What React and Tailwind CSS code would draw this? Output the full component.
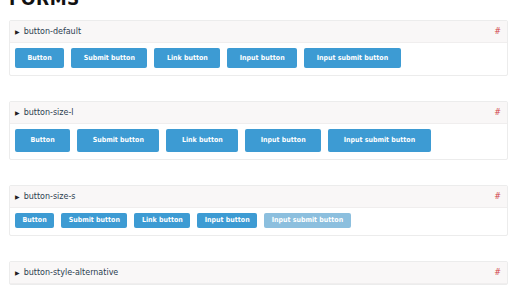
import React from 'react';

const labels = ['Button', 'Submit button', 'Link button', 'Input button', 'Input submit button'];

const sizes = {
    default: 'h-[20px] px-[12.5px]',
    l: 'h-[23px] px-[15.5px]',
    s: 'h-[15px] px-[7.5px]',
};

const Panel = ({ name, size, disabledLast }) => (
    <div className="border border-[#ececec] rounded-[2px] bg-white">
        <div className="h-[22px] bg-[#f9f7f7] flex items-center justify-between pl-[5px] pr-[6px] border-b border-[#f0eeee]">
            <div className="flex items-center gap-[4px] text-[8px] text-[#2c3e50]">
                <span className="text-[6px] text-[#222]">▶</span>
                <span>{name}</span>
            </div>
            <span className="text-[8px] text-[#d0454a]">#</span>
        </div>
        {size && (
            <div className="flex gap-[7px] px-[5px] pt-[5px] pb-[7px]">
                {labels.map((l, i) => (
                    <button
                        key={l}
                        className={`${sizes[size]} font-['DejaVu_Sans_Condensed',sans-serif] text-[7px] rounded-[2px] text-white font-bold flex items-center ${disabledLast && i === labels.length - 1 ? 'bg-[#8cbfde]' : 'bg-[#3d9bd3]'}`}
                    >
                        {l}
                    </button>
                ))}
            </div>
        )}
    </div>
);

export default function App() {
    return (
        <div className="w-[516px] h-[290px] overflow-hidden bg-white px-[9px]" style={{ fontFamily: '"DejaVu Sans", Verdana, sans-serif' }}>
            <h1 className="text-[17px] font-bold text-[#111] mt-[-11px] leading-[20px] tracking-[0.5px]">FORMS</h1>
            <div className="mt-[11px] flex flex-col gap-[25px] w-[499px]">
                <Panel name="button-default" size="default" />
                <Panel name="button-size-l" size="l" />
                <Panel name="button-size-s" size="s" disabledLast />
                <Panel name="button-style-alternative" />
            </div>
        </div>
    );
}
